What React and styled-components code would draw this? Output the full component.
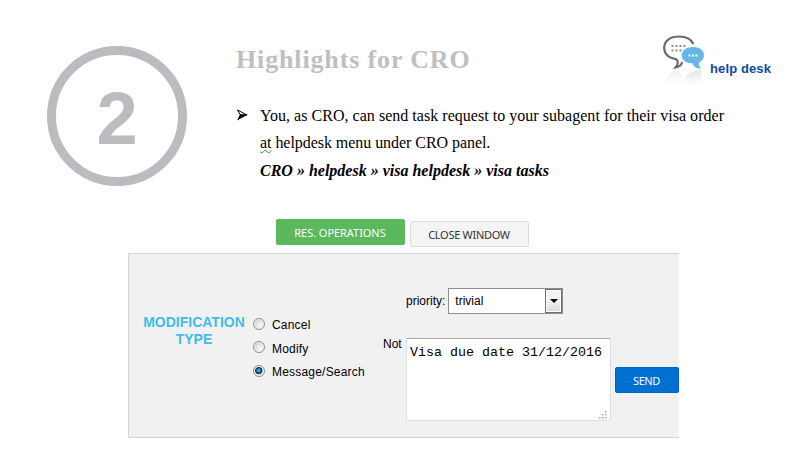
import { useState } from 'react';
import styled, { createGlobalStyle } from 'styled-components';

const GlobalStyle = createGlobalStyle`
  * {
    box-sizing: border-box;
  }

  body {
    margin: 0;
    background-color: #fff;
    color: #000;
    font-family: 'Liberation Sans', Arial, sans-serif;
    font-size: 12px;
  }
`;

const Page = styled.main`
  width: 807px;
  height: 467px;
  overflow: hidden;
`;

const Intro = styled.section`
  display: flex;
  align-items: flex-start;
  height: 219px;
  padding: 34px 0 0 47px;
`;

const StepNumber = styled.div`
  display: flex;
  align-items: center;
  justify-content: center;
  width: 140px;
  height: 140px;
  margin: 12px 49px 0 0;
  padding-top: 5px;
  border: 9px solid #bbbcc0;
  border-radius: 50%;
  color: #bbbcc0;
  font-size: 74px;
  font-weight: bold;
  line-height: 1;
`;

const Copy = styled.div`
  width: 425px;
  font-family: 'Liberation Serif', 'Times New Roman', serif;
`;

const Title = styled.h1`
  margin: 10px 0 26px;
  color: #bfbfbf;
  font-size: 26px;
  line-height: 32px;
  letter-spacing: 0.86px;
  white-space: nowrap;
`;

const Point = styled.div`
  display: flex;
`;

const Arrow = styled.svg`
  flex: none;
  width: 12px;
  height: 12px;
  margin: 7px 12px 0 0;
`;

const Line = styled.p`
  margin: 0;
  font-size: 16px;
  line-height: 27.4px;
  letter-spacing: ${({ $spacing }) => $spacing || '0'};
  white-space: nowrap;
`;

const Path = styled(Line)`
  font-weight: bold;
  font-style: italic;
`;

const Grammar = styled.span`
  text-decoration: underline wavy #2f962f 1px;
  text-underline-offset: 1px;
`;

const HelpDesk = styled.a`
  display: flex;
  align-items: center;
  color: #0b4aa2;
  font-size: 13px;
  font-weight: bold;
  letter-spacing: 0.12px;
  white-space: nowrap;

  svg {
    margin-right: 2px;
  }

  span {
    padding-top: 15px;
  }
`;

const Actions = styled.div`
  display: flex;
  gap: 5px;
  height: 34px;
  padding-left: 276px;
`;

const Button = styled.button`
  width: ${({ $width }) => $width}px;
  height: 26px;
  margin-top: ${({ $top }) => $top || 0}px;
  padding: 2px 1px 0 0;
  border: 1px solid ${({ $border, $color }) => $border || $color};
  border-radius: 2px;
  background-color: ${({ $color }) => $color};
  color: ${({ $text }) => $text || '#fff'};
  font-family: 'Noto Sans', 'Open Sans', sans-serif;
  font-size: 11px;
  line-height: 20px;
  letter-spacing: ${({ $spacing }) => $spacing || '0'};
  white-space: nowrap;
`;

const Panel = styled.form`
  display: flex;
  width: 551px;
  height: 185px;
  margin-left: 128px;
  border: 1px solid #d5d5d5;
  border-right: 0;
  background-color: #f1f1f1;
`;

const Legend = styled.div`
  width: 102px;
  margin: 60px 0 0 14px;
  color: #3fbde8;
  font-size: 14px;
  font-weight: bold;
  line-height: 17px;
  text-align: center;
`;

const Options = styled.div`
  display: flex;
  flex-direction: column;
  width: 133px;
  padding: 58px 0 0 8px;
`;

const Option = styled.label`
  display: flex;
  align-items: center;
  height: 23.5px;
  letter-spacing: 0.2px;
  white-space: nowrap;

  span {
    padding-top: 3px;
  }
`;

const Radio = styled.input`
  appearance: none;
  flex: none;
  width: 12px;
  height: 12px;
  margin: 0 7px 0 0;
  border: 1px solid #8e8f8f;
  border-radius: 50%;
  background: radial-gradient(circle at 65% 65%, #f6f6f6 10%, #c4c8cc 90%);
  box-shadow: inset 0 0 0 1px #f4f4f4;

  &:checked {
    background: radial-gradient(circle at 47% 45%, #6fd2f2 0, #1a7cb0 22%, #0b2d49 44%, #e4e8ea 54%);
  }
`;

const Message = styled.div`
  display: flex;
  flex-direction: column;
  width: 233px;
  padding-top: 33px;
`;

const Priority = styled.div`
  display: flex;
  align-items: center;
  height: 27px;
  margin-left: 28px;
`;

const Select = styled.button`
  display: flex;
  align-items: stretch;
  justify-content: space-between;
  width: 115px;
  height: 26px;
  margin-left: 3px;
  padding: 0;
  border: 1px solid #8f8f8f;
  background-color: #fff;
  color: #000;
  font-family: inherit;
  font-size: 12px;
  line-height: 24px;

  > span:first-child {
    padding-left: 6px;
  }
`;

const SelectArrow = styled.span`
  display: flex;
  align-items: center;
  justify-content: center;
  width: 17px;
  border: 1px solid #707070;
  background: linear-gradient(#f2f2f2 50%, #d8d8d8);
  box-shadow: inset 0 0 0 1px #fcfcfc;

  &::after {
    content: '';
    border: 4px solid transparent;
    border-top-color: #000;
    border-bottom: 0;
  }
`;

const NoteRow = styled.div`
  display: flex;
  align-items: flex-start;
  margin-top: 24px;
`;

const NoteLabel = styled.span`
  width: 28px;
  padding-left: 5px;
  line-height: 12px;
`;

const Note = styled.div`
  display: flex;
  justify-content: space-between;
  width: 205px;
  height: 83px;
  padding: 6px 3px 1px 3px;
  border: 1px solid #dde0e6;
  border-top-color: #ababab;
  background-color: #fff;
  font-family: 'Liberation Mono', 'Courier New', monospace;
  font-size: 13.33px;
  line-height: 15px;
  white-space: nowrap;

  svg {
    flex: none;
    align-self: flex-end;
    margin-left: -8px;
  }
`;

const SendCell = styled.div`
  padding: 113px 0 0 4px;
`;

const options = ['Cancel', 'Modify', 'Message/Search'];

const grip = [
  [6, 0],
  [3, 3],
  [6, 3],
  [0, 6],
  [3, 6],
  [6, 6],
];

function Bubbles() {
  return (
    <svg width="47" height="54" viewBox="0 0 47 54">
      <defs>
        <linearGradient id="fade" x1="0" y1="0" x2="0" y2="1">
          <stop offset="0" stopColor="#d8d8d8" />
          <stop offset="1" stopColor="#fff" />
        </linearGradient>
      </defs>
      <path d="M17 36C10 37 6 42 3 51H15L21 42Z" fill="url(#fade)" opacity=".4" />
      <path d="M40 36C34 36 28 38 23 44L28 51H42Z" fill="url(#fade)" opacity=".65" />
      <path
        d="M32.5 10C30 5 25 2.500 18 2.500C9 2.500 3.200 7 3.200 13.800C3.200 19.500 7 23.800 15 25.200C17.500 26.500 17.500 30 14.500 33.500C18 33 20.500 31 21.200 28"
        fill="none"
        stroke="#6c6c6c"
        strokeWidth="2.200"
      />
      <g fill="#8c8c8c">
        {[10.5, 14.5, 18.5, 22.5].map((x) => (
          <rect key={x} x={x} y="11" width="2" height="2" />
        ))}
        {[10.5, 14.5, 18.5].map((x) => (
          <rect key={x} x={x} y="15.500" width="2" height="2" />
        ))}
      </g>
      <path
        d="M32 13C38.500 13 43 16.500 43 21C43 24.500 41 27.200 38 28.500C37.500 31 38 32.500 40 34.500C35.500 34.500 32.500 33 31.500 29.300C25 29.300 20.700 26 20.700 21.200C20.700 16.500 25.500 13 32 13Z"
        fill="#66b7e8"
      />
      <g fill="#fff">
        <rect x="27.500" y="20.500" width="2" height="2" />
        <rect x="31" y="20.500" width="2" height="2" />
        <rect x="34.500" y="20.500" width="2" height="2" />
      </g>
    </svg>
  );
}

function App() {
  const [type, setType] = useState('Message/Search');

  return (
    <Page>
      <GlobalStyle />
      <Intro>
        <StepNumber>2</StepNumber>
        <Copy>
          <Title>Highlights for CRO</Title>
          <Point>
            <Arrow viewBox="0 0 12 12">
              <path d="M1.500 1L11 6H4.500Z" fill="#fff" stroke="#000" strokeWidth="1" />
              <path d="M1 11.500L4 5.500H12Z" fill="#000" />
            </Arrow>
            <div>
              <Line $spacing="0.03px">
                You, as CRO, can send task request to your subagent for their visa order
              </Line>
              <Line $spacing="-0.05px">
                <Grammar>at</Grammar> helpdesk menu under CRO panel.
              </Line>
              <Path>CRO » helpdesk » visa helpdesk » visa tasks</Path>
            </div>
          </Point>
        </Copy>
        <HelpDesk>
          <Bubbles />
          <span>help desk</span>
        </HelpDesk>
      </Intro>
      <Actions>
        <Button $width={129} $color="#5cb85c" $spacing="-0.05px">
          RES. OPERATIONS
        </Button>
        <Button
          $width={119}
          $top={2}
          $color="#f4f4f4"
          $border="#dcdcdc"
          $text="#333"
          $spacing="-0.3px"
        >
          CLOSE WINDOW
        </Button>
      </Actions>
      <Panel>
        <Legend>MODIFICATION TYPE</Legend>
        <Options>
          {options.map((option) => (
            <Option key={option}>
              <Radio
                type="radio"
                name="type"
                checked={type === option}
                onChange={() => setType(option)}
              />
              <span>{option}</span>
            </Option>
          ))}
        </Options>
        <Message>
          <Priority>
            priority:
            <Select type="button">
              <span>trivial</span>
              <SelectArrow />
            </Select>
          </Priority>
          <NoteRow>
            <NoteLabel>Not</NoteLabel>
            <Note>
              Visa due date 31/12/2016
              <svg width="8" height="8">
                {grip.map(([x, y]) => (
                  <rect key={`${x}${y}`} x={x} y={y} width="1.500" height="1.500" fill="#aaa" />
                ))}
              </svg>
            </Note>
          </NoteRow>
        </Message>
        <SendCell>
          <Button type="button" $width={64} $color="#0070d2" $border="#0062b8" $spacing="-0.4px">
            SEND
          </Button>
        </SendCell>
      </Panel>
    </Page>
  );
}

export default App;
